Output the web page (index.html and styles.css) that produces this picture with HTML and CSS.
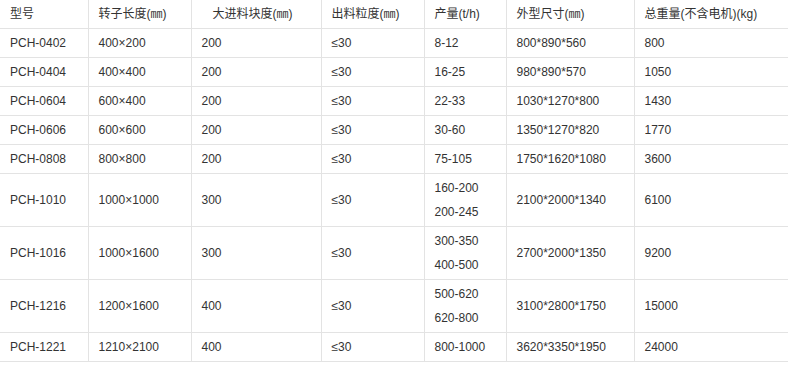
FILE: index.html
```html
<!DOCTYPE html>
<html lang="zh-CN">
<head>
<meta charset="utf-8">
<title>PCH 参数表</title>
<link rel="stylesheet" href="styles.css">
</head>
<body>
<table class="spec">
  <colgroup>
    <col class="c1"><col class="c2"><col class="c3"><col class="c4"><col class="c5"><col class="c6"><col class="c7">
  </colgroup>
  <thead>
    <tr>
      <td>型号</td>
      <td>转子长度(㎜)</td>
      <td><span class="indent">大进料块度(㎜)</span></td>
      <td>出料粒度(㎜)</td>
      <td>产量(t/h)</td>
      <td>外型尺寸(㎜)</td>
      <td>总重量(不含电机)(kg)</td>
    </tr>
  </thead>
  <tbody>
    <tr><td>PCH-0402</td><td>400×200</td><td>200</td><td>≤30</td><td>8-12</td><td>800*890*560</td><td>800</td></tr>
    <tr><td>PCH-0404</td><td>400×400</td><td>200</td><td>≤30</td><td>16-25</td><td>980*890*570</td><td>1050</td></tr>
    <tr><td>PCH-0604</td><td>600×400</td><td>200</td><td>≤30</td><td>22-33</td><td>1030*1270*800</td><td>1430</td></tr>
    <tr><td>PCH-0606</td><td>600×600</td><td>200</td><td>≤30</td><td>30-60</td><td>1350*1270*820</td><td>1770</td></tr>
    <tr><td>PCH-0808</td><td>800×800</td><td>200</td><td>≤30</td><td>75-105</td><td>1750*1620*1080</td><td>3600</td></tr>
    <tr><td>PCH-1010</td><td>1000×1000</td><td>300</td><td>≤30</td><td>160-200<br>200-245</td><td>2100*2000*1340</td><td>6100</td></tr>
    <tr><td>PCH-1016</td><td>1000×1600</td><td>300</td><td>≤30</td><td>300-350<br>400-500</td><td>2700*2000*1350</td><td>9200</td></tr>
    <tr><td>PCH-1216</td><td>1200×1600</td><td>400</td><td>≤30</td><td>500-620<br>620-800</td><td>3100*2800*1750</td><td>15000</td></tr>
    <tr><td>PCH-1221</td><td>1210×2100</td><td>400</td><td>≤30</td><td>800-1000</td><td>3620*3350*1950</td><td>24000</td></tr>
  </tbody>
</table>
</body>
</html>
```

FILE: styles.css
```css
html, body {
  margin: 0;
  padding: 0;
  background: #ffffff;
}

body {
  font-family: "Liberation Sans", Arial, "Noto Sans CJK SC", sans-serif;
  font-size: 12px;
  color: #333333;
}

.spec {
  width: 788px;
  table-layout: fixed;
  border-collapse: collapse;
  border-spacing: 0;
}

.c1 { width: 88px; }
.c2 { width: 103px; }
.c3 { width: 130px; }
.c4 { width: 103px; }
.c5 { width: 82px; }
.c6 { width: 128px; }
.c7 { width: 154px; }

.spec td {
  padding: 2px 10px;
  line-height: 24px;
  vertical-align: middle;
  text-align: left;
  white-space: nowrap;
  border-bottom: 1px solid #e3e3e3;
  border-left: 1px solid #e3e3e3;
}

.spec td:first-child {
  border-left: none;
}

.indent {
  padding-left: 11px;
}
```
